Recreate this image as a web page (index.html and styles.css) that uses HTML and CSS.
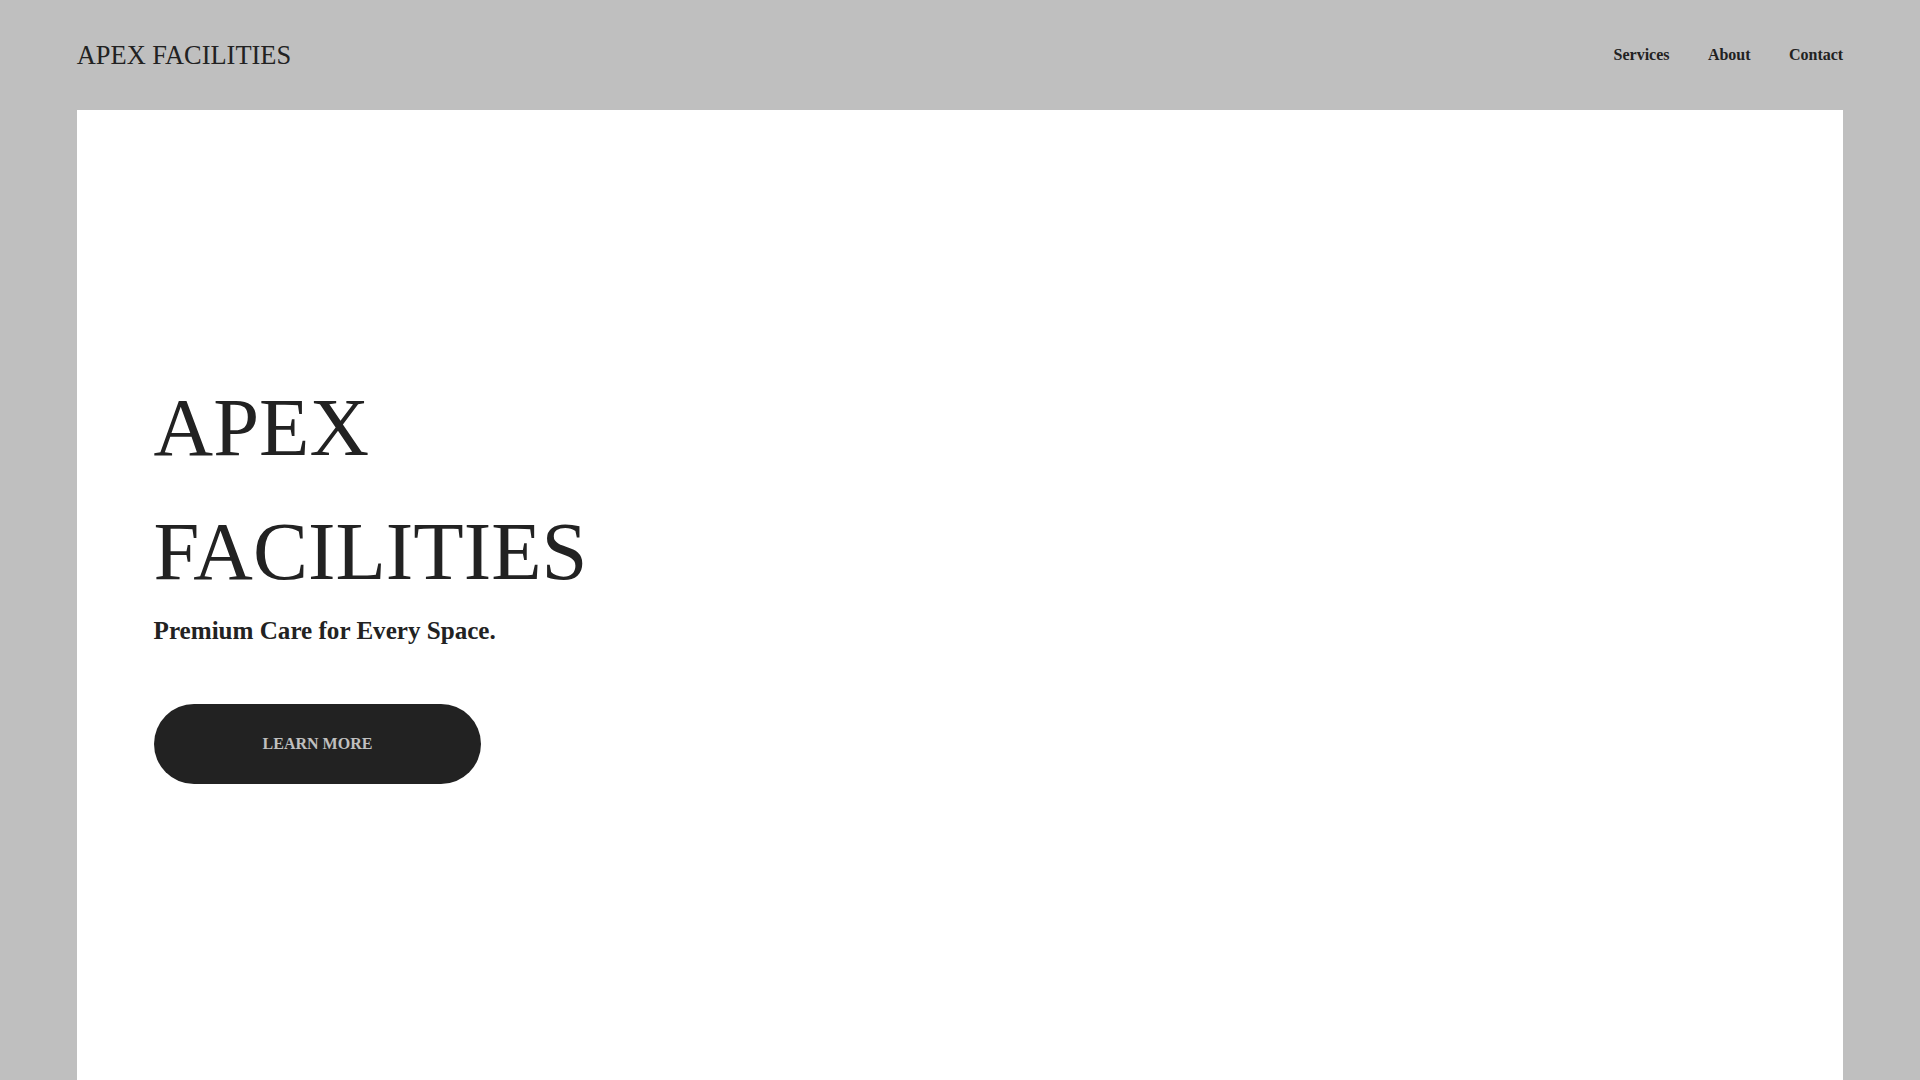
FILE: index.html
```html
<!DOCTYPE html>
<html lang="en">
<head>
<meta charset="utf-8">
<title>Apex Facilities</title>
<link rel="stylesheet" href="styles.css">
</head>
<body>
<header class="site-header">
  <a class="logo" href="#">APEX FACILITIES</a>
  <nav class="nav">
    <a class="nav-link" href="#">Services</a>
    <a class="nav-link" href="#">About</a>
    <a class="nav-link" href="#">Contact</a>
  </nav>
</header>
<main class="card">
  <section class="hero">
    <h1 class="hero-title">APEX FACILITIES</h1>
    <p class="hero-sub">Premium Care for Every Space.</p>
    <a class="hero-btn" href="#">LEARN MORE</a>
  </section>
</main>
</body>
</html>
```

FILE: styles.css
```css
html, body {
  margin: 0;
  padding: 0;
}
body {
  background: #bfbfbf;
  color: #222222;
  font-family: "Liberation Serif", "Times New Roman", serif;
}
a {
  color: inherit;
  text-decoration: none;
}
.site-header {
  height: 110px;
  padding: 0 4vw;
  display: flex;
  align-items: center;
  justify-content: space-between;
}
.logo {
  font-size: 26.4px;
  font-weight: 400;
  line-height: 1.15;
  margin-top: 1px;
}
.nav {
  display: flex;
  gap: 38.4px;
}
.nav-link {
  font-size: 16px;
  font-weight: 700;
  line-height: 1.15;
}
.card {
  display: block;
  margin: 0 4vw;
  background: #ffffff;
  min-height: calc(100vh - 110px);
  padding: 256px 4vw 0;
  box-sizing: border-box;
}
.hero {
  display: flex;
  flex-direction: column;
  align-items: flex-start;
}
.hero-title {
  margin: 0;
  max-width: 30vw;
  font-size: 82.5px;
  font-weight: 400;
  line-height: 1.5;
}
.hero-sub {
  margin: 3px 0 0;
  font-size: 25.1px;
  font-weight: 700;
  line-height: 1.15;
}
.hero-btn {
  margin-top: 59px;
  padding: 31px 109px;
  background: #222222;
  color: #c0c0c0;
  border-radius: 999px;
  font-size: 16px;
  font-weight: 700;
  line-height: 18px;
}
```
